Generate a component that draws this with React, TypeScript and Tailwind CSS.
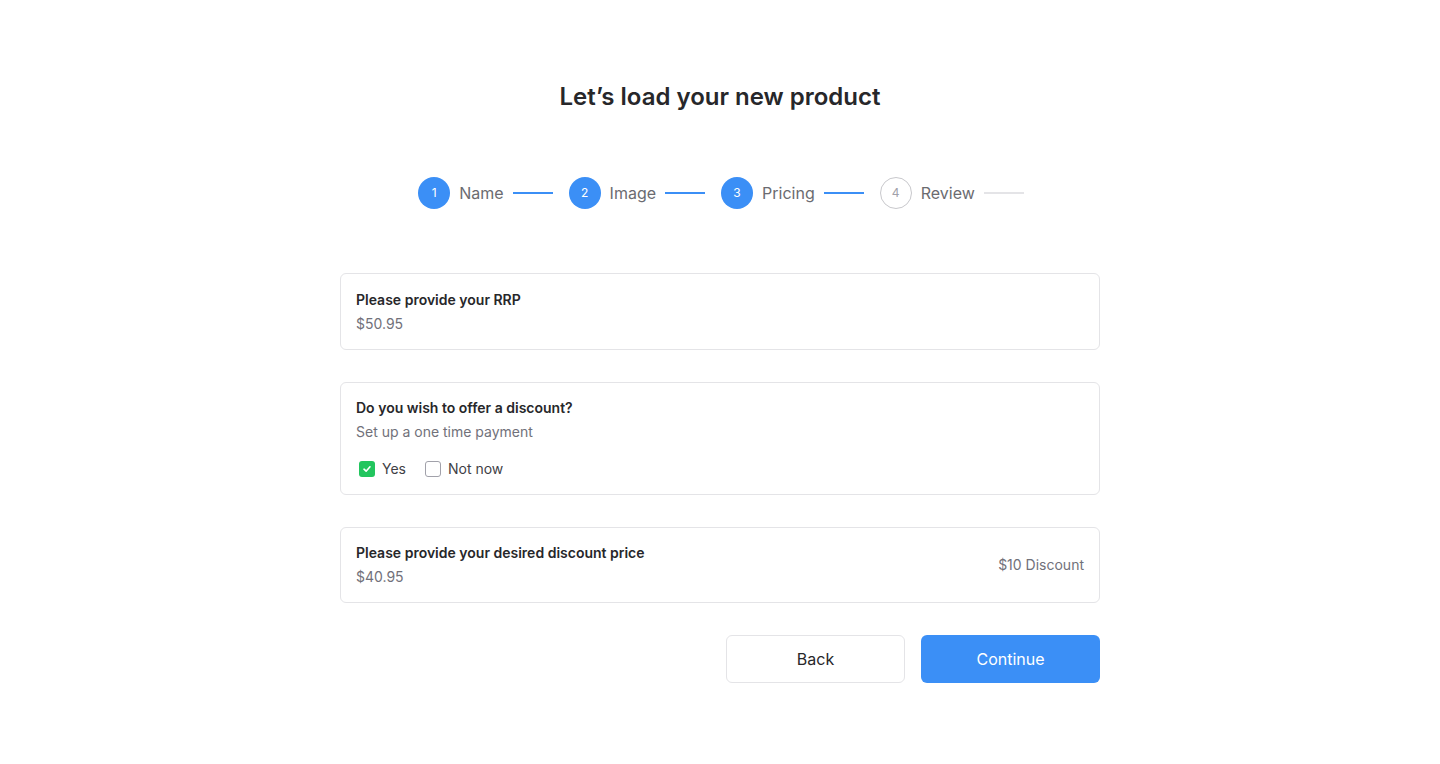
import React from "react";

const steps = [
  { n: 1, label: "Name", done: true },
  { n: 2, label: "Image", done: true },
  { n: 3, label: "Pricing", done: true },
  { n: 4, label: "Review", done: false },
];

export default function App() {
  return (
    <div
      className="min-h-screen bg-white flex flex-col items-center pt-[81px] text-[#27272a]"
      style={{ fontFamily: "Inter, 'Noto Sans', sans-serif" }}
    >
      <h1 className="text-[24px] leading-[32px] font-semibold text-[#27272a]">
        Let’s load your new product
      </h1>

      <div className="mt-16 flex items-center h-8 pl-[2px]">
        {steps.map((s, i) => (
          <div key={s.n} className={`flex items-center ${i > 0 ? "ml-4" : ""}`}>
            {s.done ? (
              <div className="w-8 h-8 rounded-full bg-[#3b8ff6] text-white text-[12px] flex items-center justify-center">
                {s.n}
              </div>
            ) : (
              <div className="w-8 h-8 rounded-full border border-[#c8c8cc] text-[#a1a1aa] text-[12px] flex items-center justify-center">
                {s.n}
              </div>
            )}
            <span className="ml-[9px] text-[16px] leading-6 text-[#6b6b70]">{s.label}</span>
            <div
              className={`ml-[9px] w-10 h-[2px] ${s.done ? "bg-[#3b8ff6]" : "bg-[#e4e4e7]"}`}
            />
          </div>
        ))}
      </div>

      <div className="mt-16 w-[760px] flex flex-col gap-8">
        <div className="border border-[#e4e4e7] rounded-md px-[15px] pt-4 pb-[15px] flex flex-col gap-1">
          <div className="text-[14px] leading-5 font-semibold text-[#27272a]">
            Please provide your RRP
          </div>
          <div className="text-[14px] leading-5 text-[#71717a]">$50.95</div>
        </div>

        <div className="border border-[#e4e4e7] rounded-md px-[15px] pt-[15px] pb-[15px] flex flex-col">
          <div className="text-[14px] leading-5 font-semibold text-[#27272a]">
            Do you wish to offer a discount?
          </div>
          <div className="mt-1 text-[14px] leading-5 text-[#71717a]">
            Set up a one time payment
          </div>
          <div className="mt-[17px] flex items-center h-5 pl-[3px]">
            <div className="flex items-center">
              <div className="w-4 h-4 rounded-[3px] bg-[#22c55e] flex items-center justify-center">
                <svg width="10" height="10" viewBox="0 0 10 10" fill="none">
                  <path
                    d="M2 5.2 L4.1 7.2 L8 2.8"
                    stroke="white"
                    strokeWidth="1.6"
                    strokeLinecap="round"
                    strokeLinejoin="round"
                  />
                </svg>
              </div>
              <span className="ml-[7px] text-[14px] leading-5 text-[#3f3f46]">Yes</span>
            </div>
            <div className="flex items-center ml-[19px]">
              <div className="w-4 h-4 rounded-[3px] border-[1.5px] border-[#a1a1aa] bg-white" />
              <span className="ml-[7px] text-[14px] leading-5 text-[#3f3f46]">Not now</span>
            </div>
          </div>
        </div>

        <div className="border border-[#e4e4e7] rounded-md px-[15px] py-[15px] flex items-center justify-between">
          <div className="flex flex-col gap-1">
            <div className="text-[14px] leading-5 font-semibold text-[#27272a]">
              Please provide your desired discount price
            </div>
            <div className="text-[14px] leading-5 text-[#71717a]">$40.95</div>
          </div>
          <div className="text-[14px] leading-5 text-[#71717a]">$10 Discount</div>
        </div>
      </div>

      <div className="mt-8 w-[760px] flex justify-end gap-4">
        <button className="w-[179px] h-12 rounded-md border border-[#e4e4e7] bg-white text-[16px] text-[#27272a]">
          Back
        </button>
        <button className="w-[179px] h-12 rounded-md bg-[#3b8ff6] text-[16px] text-white">
          Continue
        </button>
      </div>
    </div>
  );
}
